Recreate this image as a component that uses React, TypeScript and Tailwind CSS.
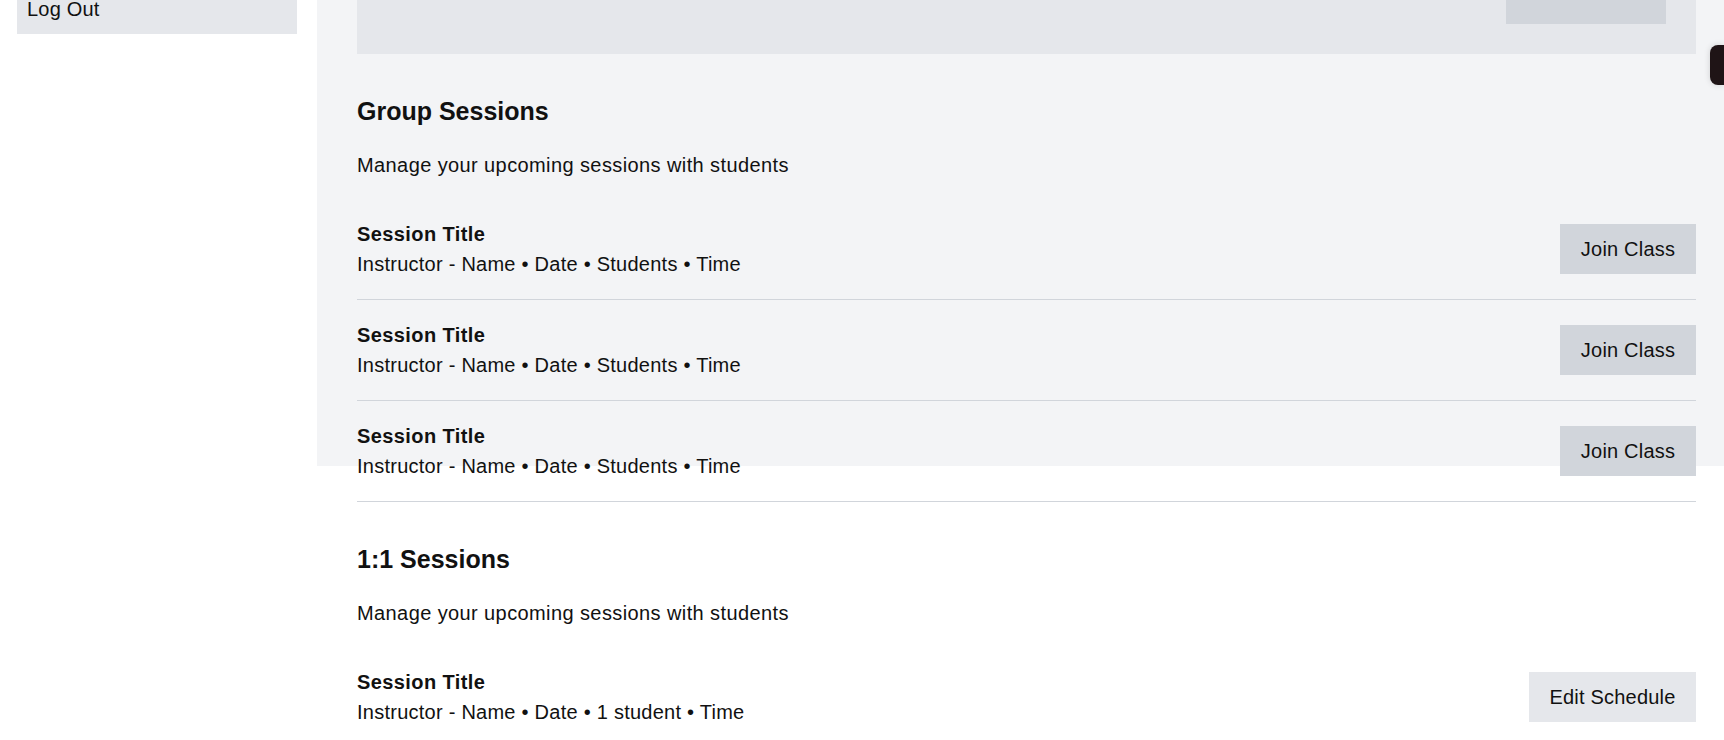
import React from "react";

type Row = { title: string; meta: string; action: string; variant: "join" | "edit" };

const groupRows: Row[] = [
  { title: "Session Title", meta: "Instructor - Name • Date • Students • Time", action: "Join Class", variant: "join" },
  { title: "Session Title", meta: "Instructor - Name • Date • Students • Time", action: "Join Class", variant: "join" },
  { title: "Session Title", meta: "Instructor - Name • Date • Students • Time", action: "Join Class", variant: "join" },
];

const oneRows: Row[] = [
  { title: "Session Title", meta: "Instructor - Name • Date • 1 student • Time", action: "Edit Schedule", variant: "edit" },
];

function SessionRow({ row }: { row: Row }) {
  return (
    <div className="flex items-center justify-between py-[20px] border-b border-[#d1d5db]">
      <div className="flex flex-col">
        <div className="text-[20px] leading-[30px] font-bold tracking-[0.4px]">{row.title}</div>
        <div className="text-[20px] leading-[30px] tracking-[0.25px]">{row.meta}</div>
      </div>
      <button
        className={
          row.variant === "join"
            ? "h-[50px] w-[136px] bg-[#d1d5db] text-[20px] leading-[30px] text-[#111] tracking-[0.2px]"
            : "h-[50px] w-[167px] bg-[#e5e7eb] text-[20px] leading-[30px] text-[#111] tracking-[0.2px]"
        }
      >
        {row.action}
      </button>
    </div>
  );
}

function Section({ title, rows }: { title: string; rows: Row[] }) {
  return (
    <section className="mt-[40px]">
      <h2 className="text-[25px] leading-[35px] font-bold">{title}</h2>
      <p className="mt-[21px] text-[20px] leading-[30px] tracking-[0.4px]">Manage your upcoming sessions with students</p>
      <div className="mt-[19px] flex flex-col">
        {rows.map((r, i) => (
          <SessionRow key={i} row={r} />
        ))}
      </div>
    </section>
  );
}

export default function App() {
  return (
    <div className="relative flex w-[1724px] h-[740px] overflow-hidden bg-white text-[#111] font-['Liberation_Sans',Arial,sans-serif]">
      <aside className="w-[317px] shrink-0 pl-[17px] pr-[20px]">
        <div className="-mt-[15px] h-[49px] pt-[9px] pl-[10px] bg-[#e5e7eb] text-[20px] leading-[30px] tracking-[0.2px]">
          Log Out
        </div>
      </aside>
      <main className="flex-1 h-[466px] bg-[#f3f4f6] pl-[40px] pr-[28px]">
        <div className="h-[54px] bg-[#e5e7eb] flex justify-end items-end pr-[30px] pb-[30px]">
          <div className="w-[160px] h-[24px] bg-[#d1d5db]" />
        </div>
        <Section title="Group Sessions" rows={groupRows} />
        <Section title="1:1 Sessions" rows={oneRows} />
      </main>
      <div className="absolute right-0 top-[45px] w-[14px] h-[40px] rounded-l-[8px] bg-[#1f1416] shadow-[0_0_6px_rgba(0,0,0,0.15)]" />
    </div>
  );
}
